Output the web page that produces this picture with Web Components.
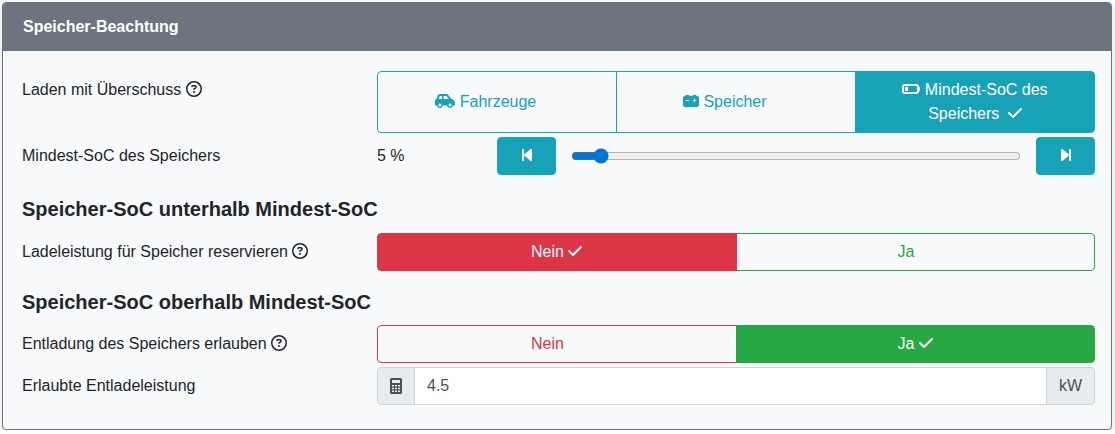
<!DOCTYPE html>
<html lang="de">
<head>
<meta charset="utf-8">
<title>Speicher-Beachtung</title>
<style>
    html, body {
        margin: 0;
        background: #fff;
    }
    body {
        padding: 2px 3px 0 2px;
        font-family: "Liberation Sans", Arial, sans-serif;
        font-size: 16px;
        color: #212529;
    }
</style>
</head>
<body>

<template id="icons">
    <svg id="check" viewBox="0 0 448 512"><path d="M470.6 105.4c12.5 12.5 12.5 32.8 0 45.3l-256 256c-12.5 12.5-32.8 12.5-45.3 0l-128-128c-12.5-12.5-12.5-32.8 0-45.3s32.8-12.5 45.3 0L192 338.7 425.4 105.4c12.5-12.5 32.8-12.5 45.3 0z" transform="translate(-32)"/></svg>
    <svg id="help" viewBox="0 0 512 512"><path d="M464 256A208 208 0 1 0 48 256a208 208 0 1 0 416 0zM0 256a256 256 0 1 1 512 0A256 256 0 1 1 0 256zm169.8-90.7c7.9-22.3 29.1-37.3 52.8-37.3h58.3c34.9 0 63.1 28.3 63.1 63.1c0 22.6-12.1 43.5-31.7 54.8L280 264.4c-.2 13-10.9 23.6-24 23.6c-13.3 0-24-10.7-24-24V250.5c0-8.6 4.6-16.5 12.1-20.8l44.3-25.4c4.7-2.7 7.6-7.7 7.6-13.1c0-8.4-6.8-15.1-15.1-15.1H222.6c-3.4 0-6.4 2.1-7.5 5.3l-.4 1.2c-4.4 12.5-18.2 19-30.6 14.6s-19-18.2-14.6-30.6l.4-1.2zM224 352a32 32 0 1 1 64 0 32 32 0 1 1 -64 0z"/></svg>
    <svg id="car" viewBox="0 0 640 512"><path d="M171.3 96H224v96H111.3l30.4-75.9C146.5 104 158.2 96 171.3 96zM272 192V96h81.2c9.7 0 18.9 4.4 25 12l67.2 84H272zm256.2 1L428.2 68c-18.2-22.8-45.8-36-75-36H171.3c-39.3 0-74.6 23.9-89.1 60.3L40.6 196.4C16.8 205.8 0 228.9 0 256V368c0 17.7 14.3 32 32 32H65.3c7.6 45.4 47.1 80 94.7 80s87.1-34.6 94.7-80H385.3c7.6 45.4 47.1 80 94.7 80s87.1-34.6 94.7-80H608c17.7 0 32-14.3 32-32V320c0-65.2-48.8-119-111.8-127zM434.7 368a48 48 0 1 1 90.5 32 48 48 0 1 1 -90.5-32zM160 336a48 48 0 1 1 0 96 48 48 0 1 1 0-96z"/></svg>
    <svg id="battery" viewBox="0 0 512 512"><path d="M80 96c0-17.7 14.3-32 32-32h64c17.7 0 32 14.3 32 32l96 0c0-17.7 14.3-32 32-32h64c17.7 0 32 14.3 32 32h16c35.3 0 64 28.7 64 64V384c0 35.3-28.7 64-64 64H64c-35.3 0-64-28.7-64-64V160c0-35.3 28.7-64 64-64l16 0zm304 96c0-8.8-7.2-16-16-16s-16 7.2-16 16v32H320c-8.8 0-16 7.2-16 16s7.2 16 16 16h32v32c0 8.8 7.2 16 16 16s16-7.2 16-16V256h32c8.8 0 16-7.2 16-16s-7.2-16-16-16H384V192zM80 240c0 8.8 7.2 16 16 16h96c8.8 0 16-7.2 16-16s-7.2-16-16-16H96c-8.8 0-16 7.2-16 16z"/></svg>
    <svg id="battery-quarter" viewBox="0 0 576 512"><path d="M464 160c8.8 0 16 7.2 16 16V336c0 8.8-7.2 16-16 16H80c-8.8 0-16-7.2-16-16V176c0-8.8 7.2-16 16-16H464zM80 96C35.8 96 0 131.8 0 176V336c0 44.2 35.8 80 80 80H464c44.2 0 80-35.8 80-80V320c17.7 0 32-14.3 32-32V224c0-17.7-14.3-32-32-32V176c0-44.2-35.8-80-80-80H80zm112 96H96V320h96V192z"/></svg>
    <svg id="step-back" viewBox="0 0 320 512"><path d="M267.5 440.6c9.5 7.9 22.8 9.7 34.1 4.4s18.4-16.6 18.4-29V96c0-12.4-7.2-23.7-18.4-29s-24.5-3.6-34.1 4.4l-192 160L64 241V96c0-17.7-14.3-32-32-32S0 78.3 0 96V416c0 17.7 14.3 32 32 32s32-14.3 32-32V271l11.5 9.6 192 160z"/></svg>
    <svg id="step-forward" viewBox="0 0 320 512"><path d="M52.5 440.6c-9.5 7.9-22.8 9.7-34.1 4.4S0 428.4 0 416V96C0 83.6 7.2 72.3 18.4 67s24.5-3.6 34.1 4.4l192 160L256 241V96c0-17.7 14.3-32 32-32s32 14.3 32 32V416c0 17.7-14.3 32-32 32s-32-14.3-32-32V271l-11.5 9.6-192 160z"/></svg>
    <svg id="calculator" viewBox="0 0 12 16"><path fill-rule="evenodd" d="M1.5 0h9A1.5 1.5 0 0 1 12 1.500v13a1.500 1.500 0 0 1-1.500 1.500h-9A1.500 1.500 0 0 1 0 14.500v-13A1.500 1.500 0 0 1 1.500 0zM2 2v3h8V2zM2 7v1.500h2V7zM5 7v1.500h2V7zM8 7v1.500h2V7zM2 9.700v1.500h2V9.700zM5 9.700v1.500h2V9.700zM8 9.700v1.500h2V9.700zM2 12.400v1.500h2V12.400zM5 12.400v1.500h2V12.400zM8 12.400v1.500h2V12.400z"/></svg>
</template>

<script>
// small FontAwesome style icon, the paths live in the template above
class FaIcon extends HTMLElement {
    constructor() {
        super();
        this.attachShadow({ mode: 'open' });
    }

    connectedCallback() {
        const src = document.getElementById('icons').content.getElementById(this.getAttribute('name'));
        this.shadowRoot.innerHTML = `
            <style>
                :host {
                    display: inline-block;
                    height: 1em;
                    line-height: 1;
                    vertical-align: -0.125em;
                }
                svg {
                    display: block;
                    height: 1em;
                    width: auto;
                    fill: currentColor;
                }
            </style>
        `;
        this.shadowRoot.appendChild(src.cloneNode(true));
    }
}

class SettingsCard extends HTMLElement {
    constructor() {
        super();
        this.attachShadow({ mode: 'open' });
    }

    connectedCallback() {
        this.shadowRoot.innerHTML = `
            <style>
                :host {
                    display: block;
                    background: #f8f9fa;
                    border: 1px solid #6c757d;
                    border-radius: 4px;
                    box-shadow: 0 2px 6px rgba(0,0,0,0.15);
                    overflow: hidden;
                }
                header {
                    background: #6c757d;
                    color: #fff;
                    font-weight: bold;
                    height: 48px;
                    line-height: 48px;
                    padding: 0 20px;
                }
                main {
                    padding: 20px 16px 20px 19px;
                }
            </style>
            <header>${this.getAttribute('heading') || ''}</header>
            <main><slot></slot></main>
        `;
    }
}

class SettingRow extends HTMLElement {
    constructor() {
        super();
        this.attachShadow({ mode: 'open' });
    }

    connectedCallback() {
        const help = this.hasAttribute('help') ? '<fa-icon name="help"></fa-icon>' : '';
        this.shadowRoot.innerHTML = `
            <style>
                :host {
                    display: grid;
                    grid-template-columns: 355px 718px;
                    margin-bottom: 4px;
                    line-height: 24px;
                }
                .label {
                    padding-top: 7px;
                }
            </style>
            <div class="label">${this.getAttribute('label') || ''} ${help}</div>
            <div><slot></slot></div>
        `;
    }
}

class SectionTitle extends HTMLElement {
    constructor() {
        super();
        this.attachShadow({ mode: 'open' });
        this.shadowRoot.innerHTML = `
            <style>
                :host {
                    display: block;
                    font-size: 20px;
                    font-weight: bold;
                    line-height: 24px;
                    margin: 22px 0 12px;
                }
            </style>
            <slot></slot>
        `;
    }
}

// segmented radio buttons, options come in as <seg-option> children
class ButtonGroup extends HTMLElement {
    constructor() {
        super();
        this.attachShadow({ mode: 'open' });
        this.shadowRoot.innerHTML = `
            <style>
                :host {
                    display: flex;
                    border-radius: 4px;
                    overflow: hidden;
                }
            </style>
            <slot></slot>
        `;
    }
}

class SegOption extends HTMLElement {
    constructor() {
        super();
        this.attachShadow({ mode: 'open' });
    }

    connectedCallback() {
        const color = this.getAttribute('color') || '#17a2b8';
        const active = this.hasAttribute('active');
        // the check keeps its space when the option is not selected
        this.shadowRoot.innerHTML = `
            <style>
                :host {
                    flex: 1 1 0;
                    display: flex;
                    align-items: center;
                    justify-content: center;
                    box-sizing: border-box;
                    min-height: 38px;
                    padding: 6px 12px;
                    text-align: center;
                    line-height: 24px;
                    border: 1px solid ${color};
                    background: ${active ? color : 'transparent'};
                    color: ${active ? '#fff' : color};
                    z-index: ${active ? 1 : 0};
                }
                :host(:not(:first-child)) {
                    margin-left: -1px;
                }
                :host(:first-child) {
                    border-radius: 4px 0 0 4px;
                }
                :host(:last-child) {
                    border-radius: 0 4px 4px 0;
                }
                .check {
                    visibility: ${active ? 'visible' : 'hidden'};
                    margin-left: var(--check-gap, 0);
                }
            </style>
            <div><slot></slot> <fa-icon class="check" name="check"></fa-icon></div>
        `;
    }
}

class RangeInput extends HTMLElement {
    constructor() {
        super();
        this.attachShadow({ mode: 'open' });
    }

    connectedCallback() {
        const value = this.getAttribute('value');
        this.shadowRoot.innerHTML = `
            <style>
                :host {
                    display: grid;
                    grid-template-columns: 120px 59px 1fr 59px;
                    align-items: center;
                }
                button {
                    height: 38px;
                    border: 1px solid #17a2b8;
                    border-radius: 4px;
                    background: #17a2b8;
                    color: #fff;
                    font: inherit;
                    padding: 0;
                }
                input {
                    margin: 0 15px;
                    min-width: 0;
                    accent-color: #0075d4;
                }
            </style>
            <span>${value} %</span>
            <button><fa-icon name="step-back"></fa-icon></button>
            <input type="range" min="0" max="100" step="1" value="${value}">
            <button><fa-icon name="step-forward"></fa-icon></button>
        `;
    }
}

class NumberInput extends HTMLElement {
    constructor() {
        super();
        this.attachShadow({ mode: 'open' });
    }

    connectedCallback() {
        this.shadowRoot.innerHTML = `
            <style>
                :host {
                    display: flex;
                    height: 38px;
                    color: #495057;
                }
                .addon {
                    display: flex;
                    align-items: center;
                    padding: 0 12px;
                    background: #e9ecef;
                    border: 1px solid #ced4da;
                }
                .addon.first {
                    border-radius: 4px 0 0 4px;
                }
                .addon.last {
                    border-radius: 0 4px 4px 0;
                }
                input {
                    flex: 1;
                    min-width: 0;
                    box-sizing: border-box;
                    padding: 6px 12px;
                    margin: 0 -1px;
                    border: 1px solid #ced4da;
                    background: #fff;
                    color: #495057;
                    font: inherit;
                    outline: none;
                }
            </style>
            <span class="addon first"><fa-icon name="calculator"></fa-icon></span>
            <input type="text" value="${this.getAttribute('value')}">
            <span class="addon last">${this.getAttribute('unit')}</span>
        `;
    }
}

customElements.define('fa-icon', FaIcon);
customElements.define('settings-card', SettingsCard);
customElements.define('setting-row', SettingRow);
customElements.define('section-title', SectionTitle);
customElements.define('button-group', ButtonGroup);
customElements.define('seg-option', SegOption);
customElements.define('range-input', RangeInput);
customElements.define('number-input', NumberInput);
</script>

<settings-card heading="Speicher-Beachtung">
    <setting-row label="Laden mit Überschuss" help>
        <button-group style="min-height:62px;--check-gap:4px">
            <seg-option><fa-icon name="car"></fa-icon> Fahrzeuge</seg-option>
            <seg-option><fa-icon name="battery"></fa-icon> Speicher</seg-option>
            <seg-option active><fa-icon name="battery-quarter"></fa-icon> Mindest-SoC des Speichers</seg-option>
        </button-group>
    </setting-row>
    <setting-row label="Mindest-SoC des Speichers">
        <range-input value="5"></range-input>
    </setting-row>

    <section-title>Speicher-SoC unterhalb Mindest-SoC</section-title>
    <setting-row label="Ladeleistung für Speicher reservieren" help>
        <button-group>
            <seg-option color="#dc3545" active>Nein</seg-option>
            <seg-option color="#28a745">Ja</seg-option>
        </button-group>
    </setting-row>

    <section-title style="margin-top:19px;margin-bottom:11px">Speicher-SoC oberhalb Mindest-SoC</section-title>
    <setting-row label="Entladung des Speichers erlauben" help>
        <button-group>
            <seg-option color="#dc3545">Nein</seg-option>
            <seg-option color="#28a745" active>Ja</seg-option>
        </button-group>
    </setting-row>
    <setting-row label="Erlaubte Entladeleistung">
        <number-input value="4.5" unit="kW"></number-input>
    </setting-row>
</settings-card>

</body>
</html>
